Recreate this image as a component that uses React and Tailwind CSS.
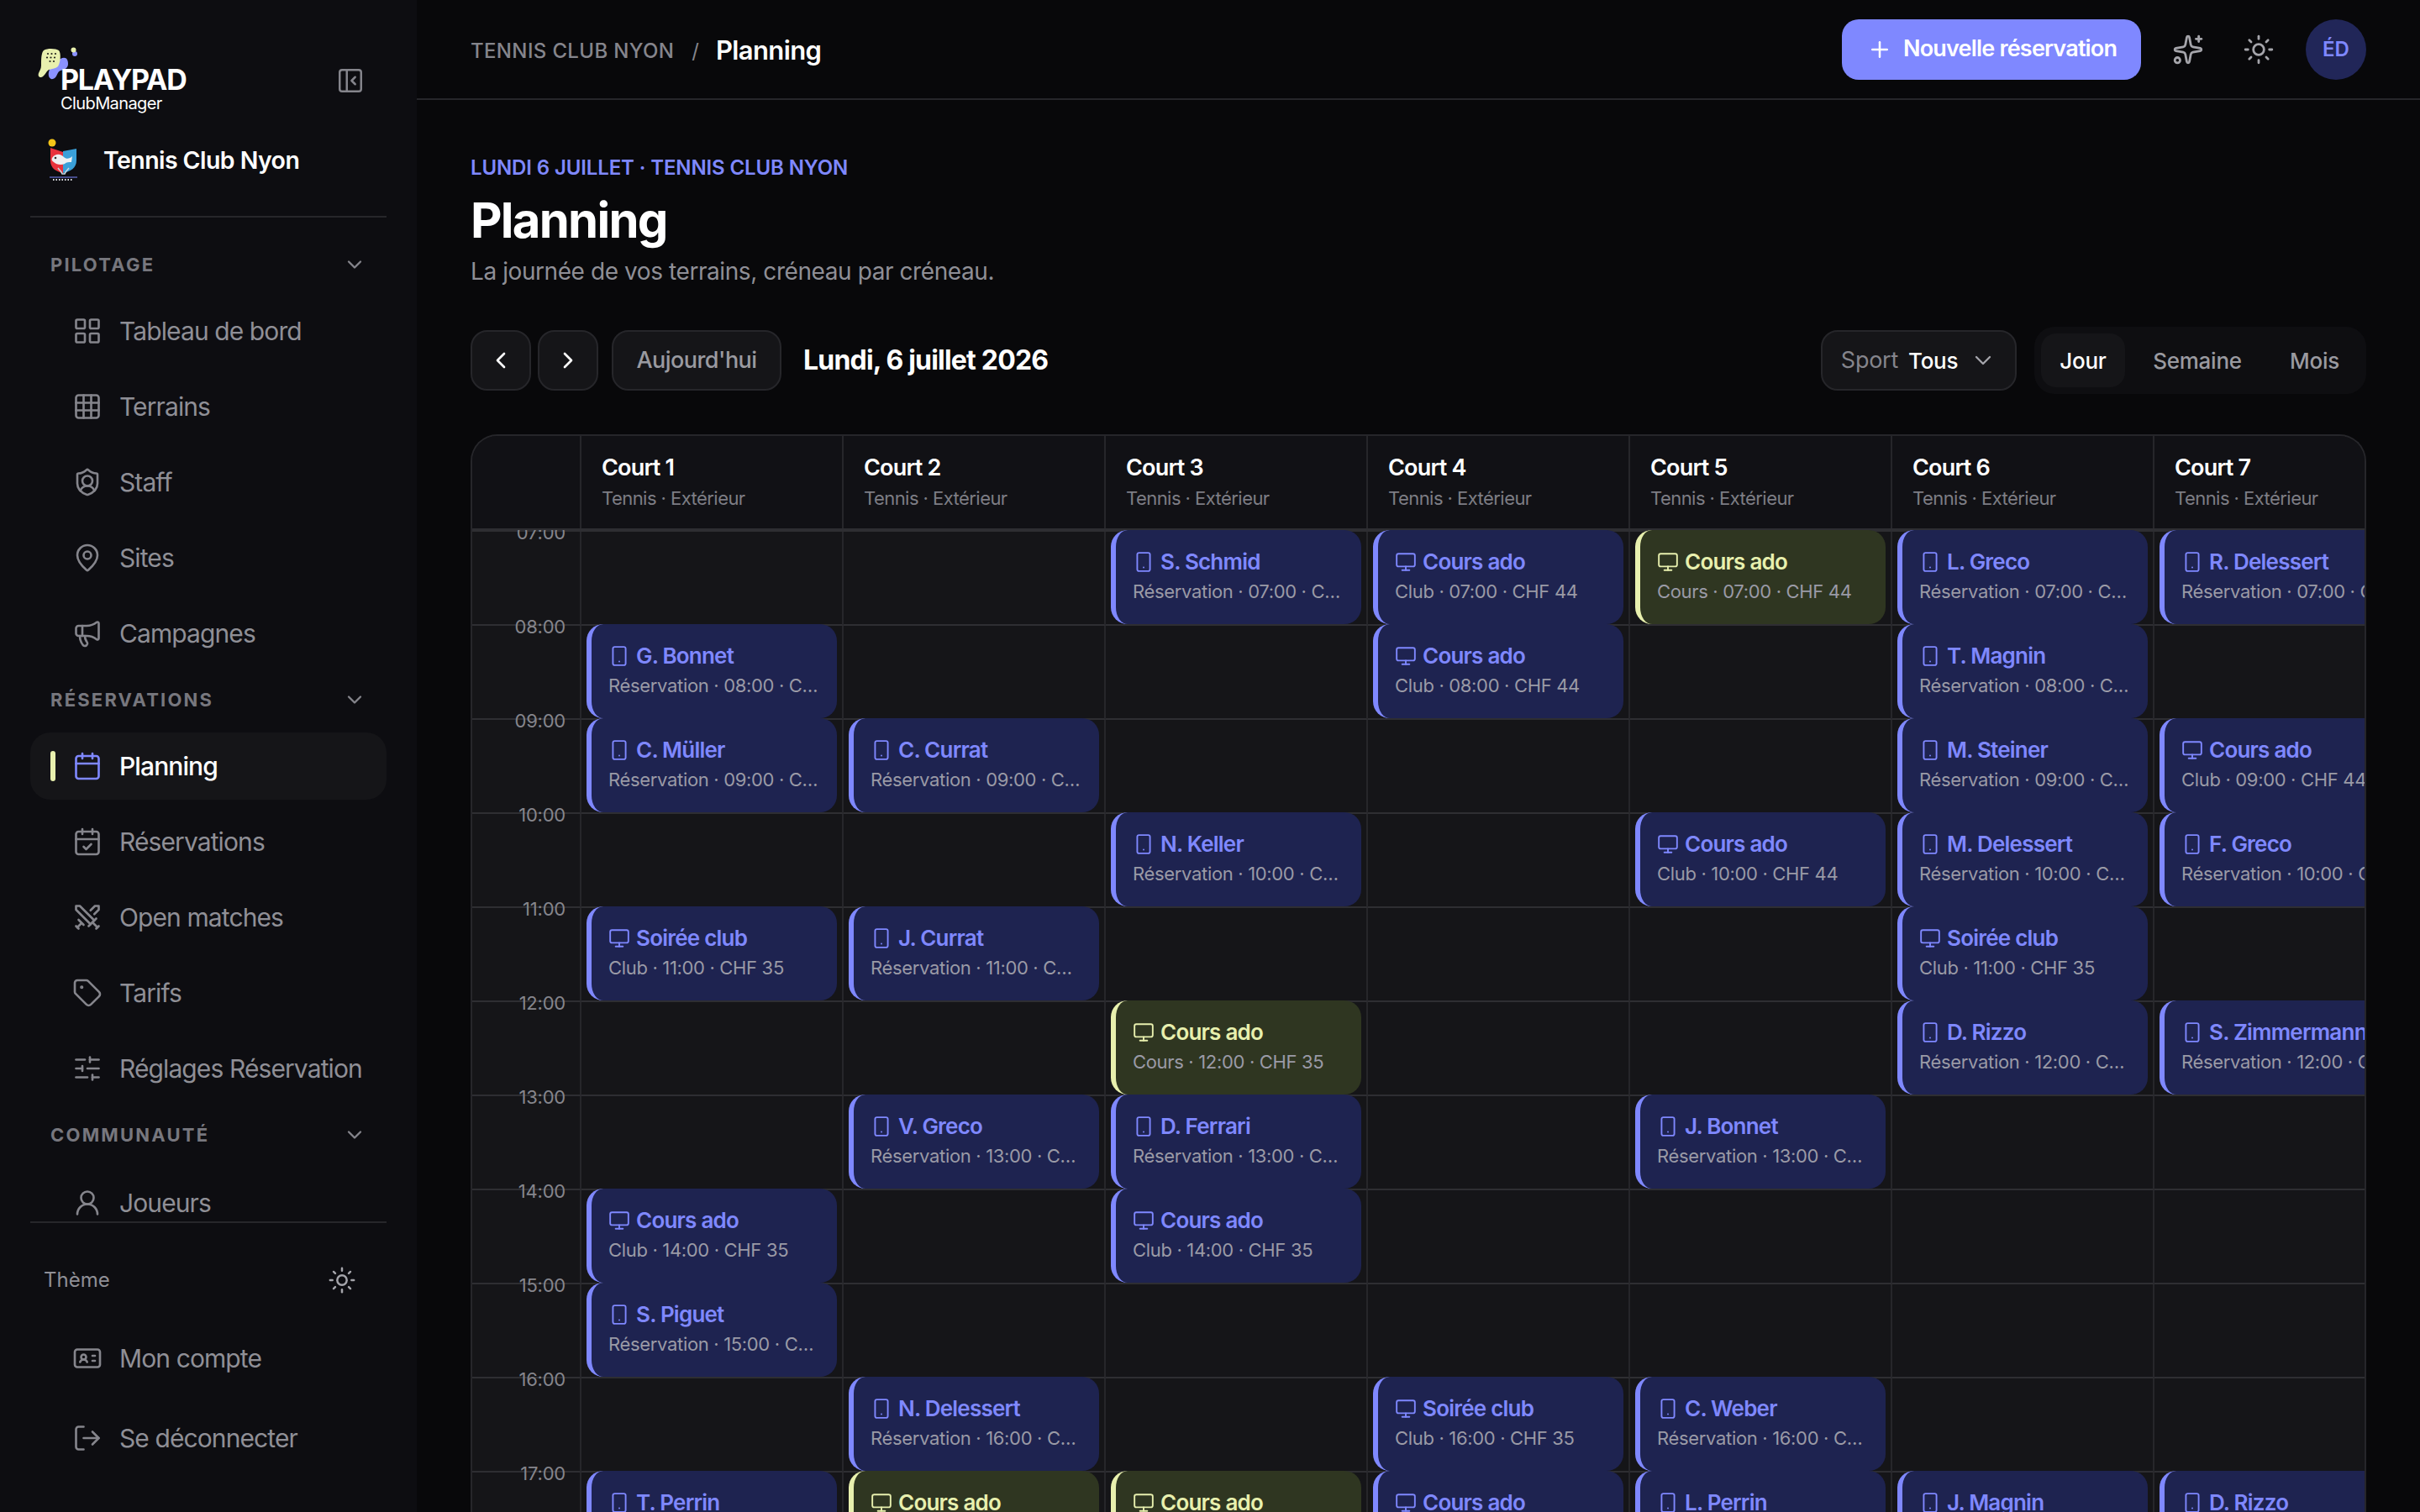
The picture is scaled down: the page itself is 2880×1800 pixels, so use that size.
import React from 'react';
import {
  Calendar, CalendarCheck, ChevronDown, ChevronLeft, ChevronRight, Grid3x3, IdCard, LayoutGrid, LogOut,
  MapPin, Megaphone, Monitor, PanelLeftClose, Plus, ShieldUser, SlidersHorizontal, Smartphone, Sparkles,
  Sun, Swords, Tag, UserRound,
} from 'lucide-react';

const HOURS = [7, 8, 9, 10, 11, 12, 13, 14, 15, 16, 17, 18];

// kind: r = réservation, c = cours ado (club), s = soirée club, l = cours (lime)
const COURTS = [
  { 8: ['r', 'G. Bonnet'], 9: ['r', 'C. Müller'], 11: ['s', 35], 14: ['c', 35], 15: ['r', 'S. Piguet'], 17: ['r', 'T. Perrin'] },
  { 9: ['r', 'C. Currat'], 11: ['r', 'J. Currat'], 13: ['r', 'V. Greco'], 16: ['r', 'N. Delessert'], 17: ['l', 35] },
  { 7: ['r', 'S. Schmid'], 10: ['r', 'N. Keller'], 12: ['l', 35], 13: ['r', 'D. Ferrari'], 14: ['c', 35], 17: ['l', 35] },
  { 7: ['c', 44], 8: ['c', 44], 16: ['s', 35], 17: ['c', 35] },
  { 7: ['l', 44], 10: ['c', 44], 13: ['r', 'J. Bonnet'], 16: ['r', 'C. Weber'], 17: ['r', 'L. Perrin'] },
  { 7: ['r', 'L. Greco'], 8: ['r', 'T. Magnin'], 9: ['r', 'M. Steiner'], 10: ['r', 'M. Delessert'], 11: ['s', 35], 12: ['r', 'D. Rizzo'], 17: ['r', 'J. Magnin'] },
  { 7: ['r', 'R. Delessert'], 9: ['c', 44], 10: ['r', 'F. Greco'], 12: ['r', 'S. Zimmermann'], 17: ['r', 'D. Rizzo'] },
];

const pad = (h) => String(h).padStart(2, '0') + ':00';

function Logo() {
  return (
    <div className="relative h-[80px] w-[190px] pl-[36px] pt-[24px]">
      <svg viewBox="0 0 50 46" className="absolute left-[8px] top-0 h-[46px] w-[50px]">
        <path d="M14 30c2-8 6-14 14-16 6-3 9 0 9 6 0 5-4 7-9 8-4 1-4 9-9 10-4 1-6-4-5-8z" fill="#8b92ff" />
        <path d="M8 4c5-3 15-2 18 0 3 3 2 15-1 19-3 3-8 3-11 4-3 2-5 8-9 9-3 0-4-2-3-5 1-3 3-5 3-9 0-7 0-15 3-18z" fill="#e8f0ae" />
        <g fill="#23241c">
          <circle cx="13" cy="8" r="1.1" /><circle cx="17.5" cy="8" r="1.1" /><circle cx="22" cy="8" r="1.1" />
          <circle cx="12" cy="12.5" r="1.1" /><circle cx="16.5" cy="12.5" r="1.1" /><circle cx="21" cy="12.5" r="1.1" />
          <circle cx="15.5" cy="17" r="1.1" /><circle cx="20" cy="17" r="1.1" />
        </g>
        <circle cx="45" cy="8" r="3" fill="#8b92ff" />
        <circle cx="43.5" cy="3.5" r="3" fill="#e8f0ae" />
      </svg>
      <div className="relative text-[34px] leading-[30px] font-bold tracking-[-0.035em] text-white">PLAYPAD</div>
      <div className="relative text-[20px] leading-[26px] font-normal tracking-[-0.03em] text-white">ClubManager</div>
    </div>
  );
}

function Crest() {
  return (
    <svg viewBox="0 0 38 53" className="h-[53px] w-[38px] shrink-0">
      <circle cx="6" cy="5" r="4.5" fill="#f5c518" />
      <path d="M4 11l15 5v25c-9-2-15-6-15-15z" fill="#e8323c" />
      <path d="M19 15l16-3v14c0 9-7 13-16 15z" fill="#3a9fd8" />
      <path d="M6 23c4-6 11-5 14-1 3 3 7 2 10-1l-1 7c-3 0-6 0-8 2-4 2-10 1-13-2-2-1-3-3-2-5z" fill="#eef0f2" />
      <circle cx="10" cy="23" r="1.3" fill="#333" />
      <path d="M13 35c2 3 4 4 5 7h3c1-3 3-4 5-7" fill="none" stroke="#c8d8e0" strokeWidth="1.5" />
      <path d="M3 46h33" stroke="#7f88ff" strokeWidth="1.2" />
      <path d="M7 49h24" stroke="#e5e7eb" strokeWidth="2.2" strokeDasharray="1.5 2" />
    </svg>
  );
}

function NavItem({ icon: Icon, label, active, big }) {
  return (
    <div className={`flex h-[80px] shrink-0 items-center gap-5 rounded-[24px] px-6 ${active ? 'bg-[#151518]' : ''} ${big ? '' : 'mb-[10px]'}`}>
      <span className={`h-[36px] w-[6px] shrink-0 rounded-full ${active ? 'bg-[#e8f0ae]' : ''}`} />
      <Icon size={36} strokeWidth={1.75} className={active ? 'shrink-0 text-[#7f88ff]' : 'shrink-0 text-[#85858c]'} />
      <span className={`whitespace-nowrap text-[30px] tracking-[-0.03em] ${active ? 'font-medium text-white' : 'text-[#8f8f96]'}`}>{label}</span>
    </div>
  );
}

function SectionLabel({ children }) {
  return (
    <div className="flex h-[78px] shrink-0 items-center justify-between px-6">
      <span className="text-[22px] font-bold tracking-[0.1em] text-[#77777e]">{children}</span>
      <ChevronDown size={28} strokeWidth={2} className="text-[#85858c]" />
    </div>
  );
}

function Sidebar() {
  return (
    <aside className="flex h-full w-[496px] shrink-0 flex-col bg-[#0d0d11] px-9">
      <div className="flex h-[136px] shrink-0 items-start justify-between pr-[26px] pt-[56px]">
        <Logo />
        <PanelLeftClose size={34} strokeWidth={1.75} className="mt-[23px] text-[#85858c]" />
      </div>
      <div className="mt-[27px] flex h-[56px] shrink-0 items-center gap-[29px] pl-[20px]">
        <Crest />
        <span className="text-[28.5px] font-semibold tracking-[-0.02em] text-white">Tennis Club Nyon</span>
      </div>
      <div className="mt-[38px] h-[2px] shrink-0 bg-[#26262a]" />
      <nav className="mt-[17px] flex h-[1178px] min-h-0 flex-col overflow-hidden">
        <SectionLabel>PILOTAGE</SectionLabel>
        <NavItem icon={LayoutGrid} label="Tableau de bord" />
        <NavItem icon={Grid3x3} label="Terrains" />
        <NavItem icon={ShieldUser} label="Staff" />
        <NavItem icon={MapPin} label="Sites" />
        <NavItem icon={Megaphone} label="Campagnes" big />
        <SectionLabel>RÉSERVATIONS</SectionLabel>
        <NavItem icon={Calendar} label="Planning" active />
        <NavItem icon={CalendarCheck} label="Réservations" />
        <NavItem icon={Swords} label="Open matches" />
        <NavItem icon={Tag} label="Tarifs" />
        <NavItem icon={SlidersHorizontal} label="Réglages Réservation" big />
        <SectionLabel>COMMUNAUTÉ</SectionLabel>
        <div className="mt-[2px]"><NavItem icon={UserRound} label="Joueurs" /></div>
      </nav>
      <div className="h-[2px] shrink-0 bg-[#26262a]" />
      <div className="mt-[36px] flex h-[64px] shrink-0 items-center justify-between pl-4 pr-[36px]">
        <span className="text-[24px] text-[#8f8f96]">Thème</span>
        <Sun size={34} strokeWidth={1.75} className="text-[#a5a5ab]" />
      </div>
      <div className="mt-[21px]"><NavItem icon={IdCard} label="Mon compte" big /></div>
      <div className="mt-[15px]"><NavItem icon={LogOut} label="Se déconnecter" big /></div>
    </aside>
  );
}

function Topbar() {
  return (
    <header className="flex h-[119px] shrink-0 items-center justify-between border-b-2 border-[#26262a] px-16">
      <div className="flex items-center pt-[4px] text-[#85858c]">
        <span className="text-[24px] font-medium tracking-[0.015em]">TENNIS CLUB NYON</span>
        <span className="ml-[21px] mr-[20px] text-[24px]">/</span>
        <span className="text-[31px] font-semibold tracking-[-0.02em] text-white">Planning</span>
      </div>
      <div className="flex items-center">
        <button className="flex h-[72px] w-[356px] items-center gap-[13px] rounded-[20px] bg-[#7f88ff] pl-[30px] text-[27px] font-semibold tracking-[-0.03em] whitespace-nowrap text-white">
          <Plus size={30} strokeWidth={2} className="shrink-0" />
          Nouvelle réservation
        </button>
        <Sparkles size={38} strokeWidth={1.75} className="ml-[37px] text-[#a5a5ab]" />
        <Sun size={38} strokeWidth={1.75} className="ml-[46px] text-[#a5a5ab]" />
        <div className="ml-[37px] flex h-[72px] w-[72px] items-center justify-center rounded-full bg-[#212658] text-[24px] font-semibold text-[#7f88ff]">ÉD</div>
      </div>
    </header>
  );
}

function Toolbar() {
  const box = 'flex h-[72px] items-center justify-center rounded-[20px] border-2 border-[#26262a] bg-[#151518]';
  return (
    <div className="mt-[46px] flex h-[80px] shrink-0 items-center justify-between">
      <div className="flex items-center">
        <button className={`${box} w-[72px] text-white`}><ChevronLeft size={32} strokeWidth={2} /></button>
        <button className={`${box} ml-[8px] w-[72px] text-white`}><ChevronRight size={32} strokeWidth={2} /></button>
        <button className={`${box} ml-[16px] w-[202px] text-[27px] font-medium tracking-[-0.02em] text-[#9a9aa0]`}>Aujourd'hui</button>
        <span className="ml-[26px] text-[32px] font-bold tracking-[-0.025em] text-white">Lundi, 6 juillet 2026</span>
      </div>
      <div className="flex items-center">
        <div className={`${box} w-[233px] gap-[12px] text-[27px] tracking-[-0.01em]`}>
          <span className="text-[#85858c]">Sport</span>
          <span className="text-[26px] font-medium text-white">Tous</span>
          <ChevronDown size={32} strokeWidth={1.75} className="ml-[2px] text-[#a5a5ab]" />
        </div>
        <div className="ml-[21px] flex h-[80px] items-center gap-2 rounded-[24px] bg-[#0e0e11] p-2 text-[26px] tracking-[-0.01em] text-[#9a9aa0]">
          <span className="flex h-[64px] w-[100px] items-center justify-center rounded-[18px] bg-[#151518] font-medium text-white">Jour</span>
          <span className="flex w-[156px] justify-center font-medium">Semaine</span>
          <span className="flex w-[107px] justify-center font-medium">Mois</span>
        </div>
      </div>
    </div>
  );
}

function EventCard({ hour, kind, value }) {
  const isBooking = kind === 'r';
  const lime = kind === 'l';
  const Icon = isBooking ? Smartphone : Monitor;
  const title = isBooking ? value : kind === 's' ? 'Soirée club' : 'Cours ado';
  const sub = isBooking
    ? `Réservation · ${pad(hour)} · CHF 44`
    : `${lime ? 'Cours' : 'Club'} · ${pad(hour)} · CHF ${value}`;
  return (
    <div className={`relative z-10 -mt-[2px] flex h-[112px] flex-col justify-center overflow-hidden rounded-[20px] border-l-[6px] pl-[20px] pr-[20px] ${lime ? 'border-[#e8f0ae] bg-[#2f3621]' : 'border-[#7f88ff] bg-[#1e2350]'}`}>
      <div className={`-mt-[2px] flex items-center gap-[7px] text-[26px] leading-[34px] font-semibold tracking-[-0.03em] whitespace-nowrap ${lime ? 'text-[#e8f0ae]' : 'text-[#7f88ff]'}`}>
        <Icon size={26} strokeWidth={1.75} className="shrink-0" />
        {title}
      </div>
      <div className="mt-[2px] truncate text-[22px] leading-[32px] tracking-[-0.015em] text-[#9a9aa6]">{sub}</div>
    </div>
  );
}

function Schedule() {
  return (
    <div className="mt-[48px] min-h-0 flex-1 overflow-hidden rounded-t-[32px] border-x-2 border-t-2 border-[#26262a] bg-[#151518]">
      <div className="grid h-[114px] w-max grid-cols-[130px_repeat(7,312px)] border-b-4 border-[#2e2e32] bg-[#111115]">
        <div className="border-r-2 border-[#26262a]" />
        {COURTS.map((_, i) => (
          <div key={i} className="flex flex-col border-r-2 border-[#26262a] pl-[24px] pt-[20px]">
            <span className="text-[27px] leading-[36px] font-semibold tracking-[-0.03em] text-white">Court {i + 1}</span>
            <span className="mt-[2px] text-[22px] leading-[32px] tracking-[-0.025em] text-[#7d7d84]">Tennis · Extérieur</span>
          </div>
        ))}
      </div>
      <div className="relative -mt-[2px] h-[1200px] overflow-hidden pt-[2px]">
        <div className="grid w-max grid-cols-[130px_repeat(7,312px)] grid-rows-[repeat(12,112px)]">
          {HOURS.map((h) => (
            <React.Fragment key={h}>
              <div className="border-r-2 border-b-2 border-r-[#26262a] border-b-[#2e2e32]">
                <div className="relative z-20 -mt-[14px] pr-[17px] text-right text-[22px] leading-[30px] tracking-[-0.01em] text-[#85858c]">{pad(h)}</div>
              </div>
              {COURTS.map((court, i) => (
                <div key={i} className="border-r-2 border-b-2 border-r-[#26262a] border-b-[#2e2e32] px-[6px]">
                  {court[h] && <EventCard hour={h} kind={court[h][0]} value={court[h][1]} />}
                </div>
              ))}
            </React.Fragment>
          ))}
        </div>
      </div>
    </div>
  );
}

export default function App() {
  return (
    <div className="flex h-[1800px] w-[2880px] overflow-hidden bg-[#08080a] font-['Inter',sans-serif]">
      <Sidebar />
      <main className="flex h-full min-w-0 flex-1 flex-col">
        <Topbar />
        <div className="flex min-h-0 flex-1 flex-col px-16">
          <div className="mt-[63px] text-[24px] leading-[36px] font-semibold tracking-[-0.005em] text-[#7f88ff]">LUNDI 6 JUILLET · TENNIS CLUB NYON</div>
          <h1 className="mt-[8px] text-[58px] leading-[72px] font-bold tracking-[-0.03em] text-white">Planning</h1>
          <p className="mt-[5px] text-[28px] leading-[40px] tracking-[-0.015em] text-[#8f8f96]">La journée de vos terrains, créneau par créneau.</p>
          <Toolbar />
          <Schedule />
        </div>
      </main>
    </div>
  );
}
